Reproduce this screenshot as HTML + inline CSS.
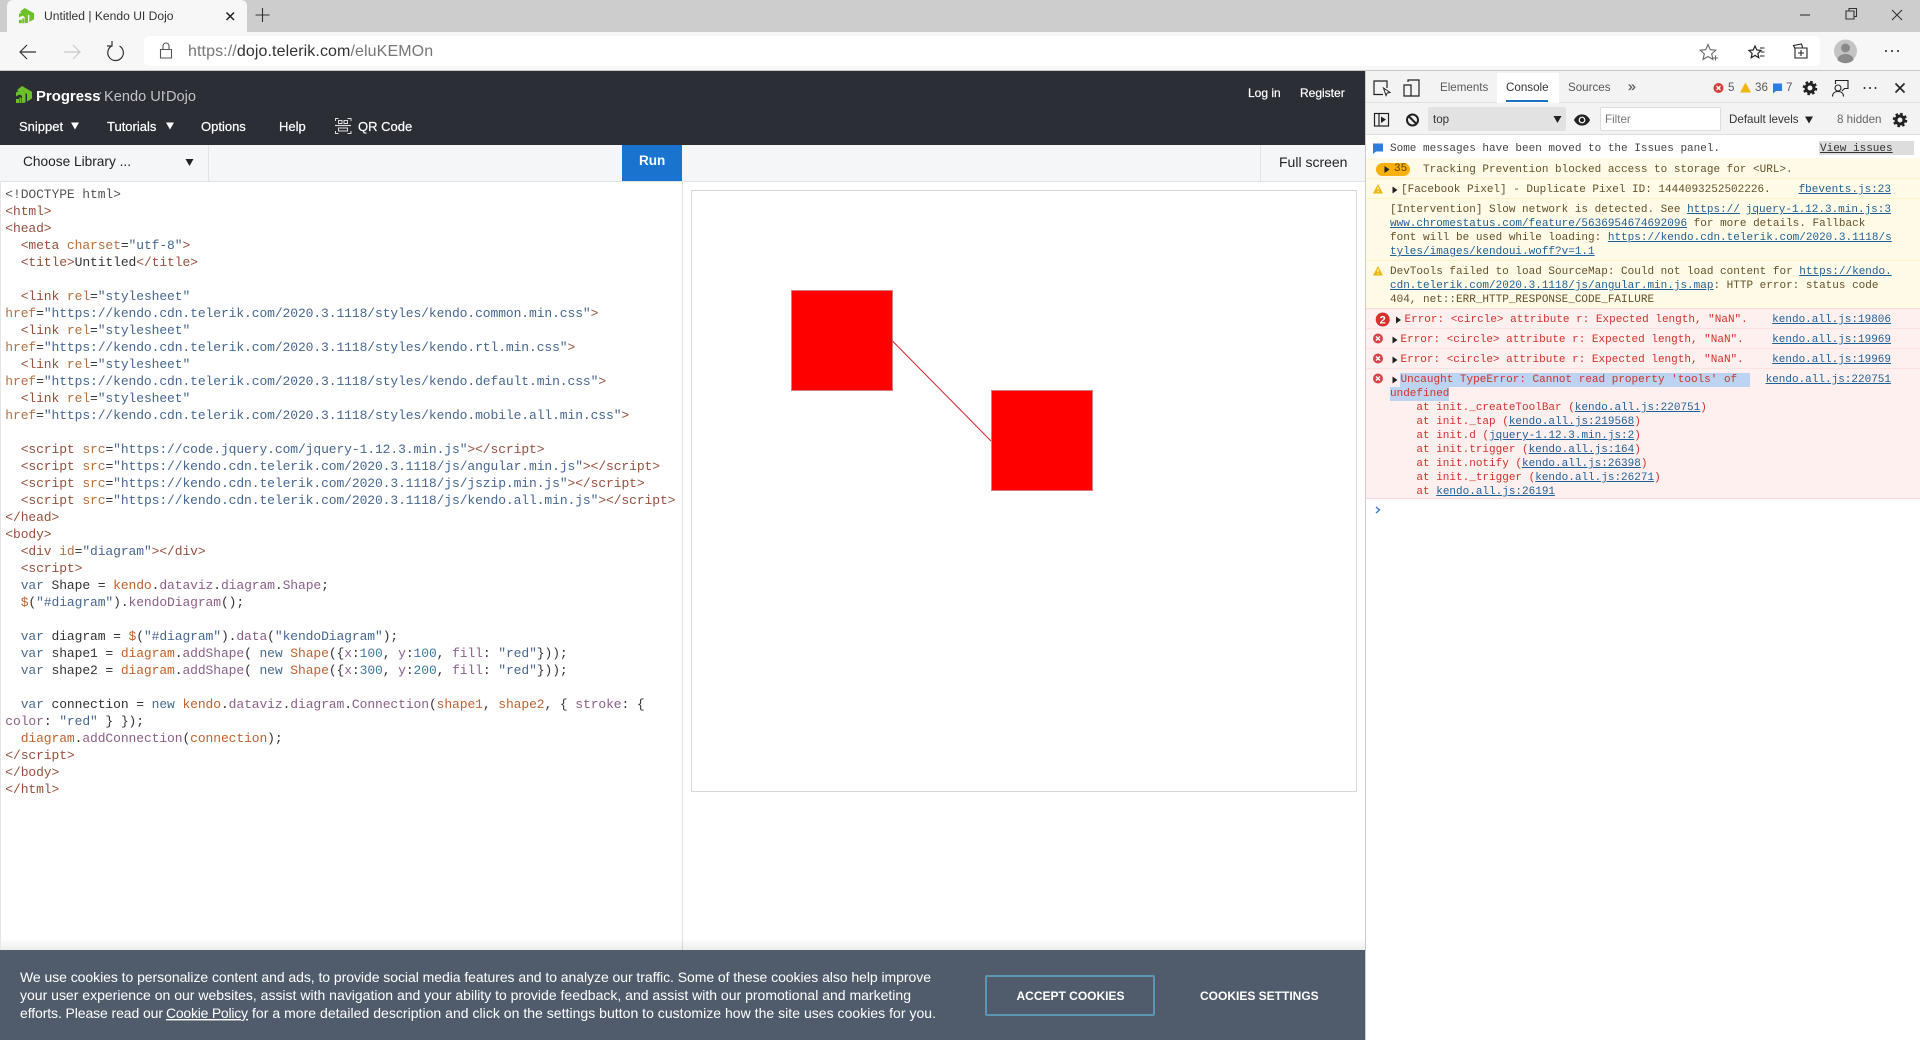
<!DOCTYPE html>
<html><head><meta charset="utf-8"><title>Untitled | Kendo UI Dojo</title>
<style>
html,body{margin:0;padding:0;background:#fff}
body{width:1920px;height:1040px;position:relative;overflow:hidden;font-family:"Liberation Sans",sans-serif;color:#222}
.b{position:absolute}
.x{position:absolute;white-space:pre;line-height:16px}
.w{color:#fff;font-size:13px;-webkit-text-stroke:.2px #fff}
pre{margin:0}
#code{position:absolute;left:5.3px;top:186px;font:13px/17px "Liberation Mono",monospace;letter-spacing:-.1px;color:#333}
.g{color:#96503c}.h{color:#b5703f}.s{color:#466790}.k{color:#4a6c8c}.v{color:#c0622d}.p{color:#8a6088}.n{color:#3d7a9c}
.m{position:absolute;white-space:pre;font:11px/14px "Liberation Mono",monospace;color:#63502a}
.e{color:#d3302a}
.m a{color:#1f5f98;text-decoration:underline}
.r{right:29px}
.d{font-size:11.6px;color:#5a5a5a}
</style></head>
<body>
<!-- browser chrome -->
<div class="b" style="left:0;top:0;width:1920px;height:32px;background:#cdcdcd"></div>
<div class="b" style="left:0;top:32px;width:1920px;height:39px;background:#f7f7f7;border-bottom:1px solid #c8c8c8;box-sizing:border-box"></div>
<div class="b" style="left:7px;top:0;width:240px;height:33px;background:#f7f7f7;border-radius:6px 6px 0 0"></div>
<div class="x" style="left:44px;top:8px;font-size:12.1px;color:#333">Untitled | Kendo UI Dojo</div>
<div class="b" style="left:144px;top:36px;width:1676px;height:30px;background:#fff;border-radius:5px"></div>
<div class="x" style="left:188px;top:44px;font-size:16px;color:#777;letter-spacing:.1px">https://<span style="color:#333">dojo.telerik.com</span>/eluKEMOn</div>

<!-- dojo header -->
<div class="b" style="left:0;top:71px;width:1365px;height:74px;background:#2b2e35"></div>
<div class="x" style="left:36px;top:89px;font-size:14.9px;font-weight:bold;color:#fff">Progress</div>
<div class="x" style="left:104px;top:89px;font-size:14.6px;color:#c4c4c4">Kendo UI</div>
<div class="x" style="left:166px;top:89px;font-size:14.6px;color:#c4c4c4">Dojo</div>
<div class="x w" style="left:19px;top:119px">Snippet</div>
<div class="x w" style="left:107px;top:119px">Tutorials</div>
<div class="x w" style="left:201px;top:119px">Options</div>
<div class="x w" style="left:279px;top:119px">Help</div>
<div class="x w" style="left:358px;top:119px">QR Code</div>
<div class="x w" style="left:1248px;top:85px;font-size:12px">Log in</div>
<div class="x w" style="left:1300px;top:85px;font-size:12px">Register</div>

<!-- library bar -->
<div class="b" style="left:0;top:145px;width:1365px;height:37px;background:#f5f6f8;border-bottom:1px solid #dfe1e4;box-sizing:border-box"></div>
<div class="b" style="left:208px;top:145px;width:1px;height:36px;background:#e2e3e6"></div>
<div class="b" style="left:1260px;top:145px;width:1px;height:36px;background:#e2e3e6"></div>
<div class="b" style="left:622px;top:145px;width:60px;height:36px;background:#1a73cf"></div>
<div class="x" style="left:23px;top:154px;font-size:13.7px;color:#222">Choose Library ...</div>
<div class="x" style="left:639px;top:153px;font-size:13.5px;font-weight:bold;color:#fff">Run</div>
<div class="x" style="left:1279px;top:154px;font-size:14px;color:#222">Full screen</div>

<!-- editor -->
<div class="b" style="left:0;top:181px;width:1px;height:770px;background:#e6e6e6"></div>
<div class="b" style="left:682px;top:181px;width:1px;height:770px;background:#e2e2e2"></div>
<pre id="code"><span style="color:#555">&lt;!DOCTYPE html&gt;</span>
<span class="g">&lt;html&gt;</span>
<span class="g">&lt;head&gt;</span>
  <span class="g">&lt;meta</span> <span class="h">charset</span>=<span class="s">"utf-8"</span><span class="g">&gt;</span>
  <span class="g">&lt;title&gt;</span>Untitled<span class="g">&lt;/title&gt;</span>

  <span class="g">&lt;link</span> <span class="h">rel</span>=<span class="s">"stylesheet"</span>
<span class="h">href</span>=<span class="s">"https://kendo.cdn.telerik.com/2020.3.1118/styles/kendo.common.min.css"</span><span class="g">&gt;</span>
  <span class="g">&lt;link</span> <span class="h">rel</span>=<span class="s">"stylesheet"</span>
<span class="h">href</span>=<span class="s">"https://kendo.cdn.telerik.com/2020.3.1118/styles/kendo.rtl.min.css"</span><span class="g">&gt;</span>
  <span class="g">&lt;link</span> <span class="h">rel</span>=<span class="s">"stylesheet"</span>
<span class="h">href</span>=<span class="s">"https://kendo.cdn.telerik.com/2020.3.1118/styles/kendo.default.min.css"</span><span class="g">&gt;</span>
  <span class="g">&lt;link</span> <span class="h">rel</span>=<span class="s">"stylesheet"</span>
<span class="h">href</span>=<span class="s">"https://kendo.cdn.telerik.com/2020.3.1118/styles/kendo.mobile.all.min.css"</span><span class="g">&gt;</span>

  <span class="g">&lt;script</span> <span class="h">src</span>=<span class="s">"https://code.jquery.com/jquery-1.12.3.min.js"</span><span class="g">&gt;&lt;/script&gt;</span>
  <span class="g">&lt;script</span> <span class="h">src</span>=<span class="s">"https://kendo.cdn.telerik.com/2020.3.1118/js/angular.min.js"</span><span class="g">&gt;&lt;/script&gt;</span>
  <span class="g">&lt;script</span> <span class="h">src</span>=<span class="s">"https://kendo.cdn.telerik.com/2020.3.1118/js/jszip.min.js"</span><span class="g">&gt;&lt;/script&gt;</span>
  <span class="g">&lt;script</span> <span class="h">src</span>=<span class="s">"https://kendo.cdn.telerik.com/2020.3.1118/js/kendo.all.min.js"</span><span class="g">&gt;&lt;/script&gt;</span>
<span class="g">&lt;/head&gt;</span>
<span class="g">&lt;body&gt;</span>
  <span class="g">&lt;div</span> <span class="h">id</span>=<span class="s">"diagram"</span><span class="g">&gt;&lt;/div&gt;</span>
  <span class="g">&lt;script&gt;</span>
  <span class="k">var</span> Shape = <span class="v">kendo</span>.<span class="p">dataviz</span>.<span class="p">diagram</span>.<span class="p">Shape</span>;
  <span class="v">$</span>(<span class="s">"#diagram"</span>).<span class="p">kendoDiagram</span>();

  <span class="k">var</span> diagram = <span class="v">$</span>(<span class="s">"#diagram"</span>).<span class="p">data</span>(<span class="s">"kendoDiagram"</span>);
  <span class="k">var</span> shape1 = <span class="v">diagram</span>.<span class="p">addShape</span>( <span class="k">new</span> <span class="v">Shape</span>({<span class="p">x</span>:<span class="n">100</span>, <span class="p">y</span>:<span class="n">100</span>, <span class="p">fill</span>: <span class="s">"red"</span>}));
  <span class="k">var</span> shape2 = <span class="v">diagram</span>.<span class="p">addShape</span>( <span class="k">new</span> <span class="v">Shape</span>({<span class="p">x</span>:<span class="n">300</span>, <span class="p">y</span>:<span class="n">200</span>, <span class="p">fill</span>: <span class="s">"red"</span>}));

  <span class="k">var</span> connection = <span class="k">new</span> <span class="v">kendo</span>.<span class="p">dataviz</span>.<span class="p">diagram</span>.<span class="p">Connection</span>(<span class="v">shape1</span>, <span class="v">shape2</span>, { <span class="p">stroke</span>: {
<span class="p">color</span>: <span class="s">"red"</span> } });
  <span class="v">diagram</span>.<span class="p">addConnection</span>(<span class="v">connection</span>);
<span class="g">&lt;/script&gt;</span>
<span class="g">&lt;/body&gt;</span>
<span class="g">&lt;/html&gt;</span></pre>

<!-- preview -->
<div class="b" style="left:691px;top:190px;width:666px;height:602px;border:1px solid #d4d6d8;box-sizing:border-box;background:#fff"></div>
<div class="b" style="left:791px;top:290px;width:102px;height:101px;background:#f00;border:1px solid #cf7f7f;box-sizing:border-box"></div>
<div class="b" style="left:991px;top:390px;width:102px;height:101px;background:#f00;border:1px solid #cf7f7f;box-sizing:border-box"></div>

<!-- cookie banner -->
<div class="b" style="left:1px;top:938px;width:1364px;height:12px;background:linear-gradient(rgba(0,0,0,0),rgba(0,0,0,.07))"></div>
<div class="b" style="left:0;top:950px;width:1365px;height:90px;background:#505c6b"></div>
<svg class="b" style="left:0;top:950px" width="985" height="90" font-family="Liberation Sans, sans-serif" font-size="14" fill="#fff">
<text x="20" y="32" textLength="911" lengthAdjust="spacing">We use cookies to personalize content and ads, to provide social media features and to analyze our traffic. Some of these cookies also help improve</text>
<text x="20" y="50" textLength="891" lengthAdjust="spacing">your user experience on our websites, assist with navigation and your ability to provide feedback, and assist with our promotional and marketing</text>
<text x="20" y="68" textLength="143" lengthAdjust="spacing">efforts. Please read our</text>
<text x="166" y="68" textLength="82" lengthAdjust="spacing" text-decoration="underline">Cookie Policy</text>
<text x="252" y="68" textLength="684" lengthAdjust="spacing">for a more detailed description and click on the settings button to customize how the site uses cookies for you.</text>
</svg>
<div class="b" style="left:985px;top:975px;width:170px;height:41px;border:2px solid #5a97b5;border-radius:2px;box-sizing:border-box"></div>
<div class="x" style="left:1016.500px;top:988px;font-size:12px;font-weight:bold;color:#fff">ACCEPT COOKIES</div>
<div class="x" style="left:1200px;top:988px;font-size:12px;font-weight:bold;color:#fff">COOKIES SETTINGS</div>

<!-- devtools -->
<div class="b" style="left:1365px;top:71px;width:555px;height:969px;background:#fff;border-left:1px solid #ccc;box-sizing:border-box"></div>
<div class="b" style="left:1366px;top:71px;width:554px;height:32px;background:#f3f3f3;border-bottom:1px solid #e0e0e0;box-sizing:border-box"></div>
<div class="b" style="left:1366px;top:103px;width:554px;height:32px;background:#f3f3f3;border-bottom:1px solid #ddd;box-sizing:border-box"></div>
<div class="b" style="left:1497px;top:73px;width:62px;height:30px;background:#fff"></div>
<div class="b" style="left:1506px;top:100px;width:42px;height:2px;background:#1a73c0"></div>
<div class="x d" style="left:1440px;top:80px">Elements</div>
<div class="x d" style="left:1506px;top:80px;color:#333">Console</div>
<div class="x d" style="left:1568px;top:80px">Sources</div>
<div class="x d" style="left:1628px;top:78px;font-size:14px;-webkit-text-stroke:.3px #5a5a5a">»</div>
<div class="x d" style="left:1728px;top:80px">5</div>
<div class="x d" style="left:1755px;top:80px">36</div>
<div class="x d" style="left:1786px;top:80px">7</div>
<div class="b" style="left:1428px;top:107px;width:138px;height:24px;background:#e2e2e2;border-radius:2px"></div>
<div class="x d" style="left:1433px;top:112px;color:#333">top</div>
<div class="b" style="left:1600px;top:107px;width:121px;height:24px;background:#fff;border:1px solid #dcdcdc;border-radius:2px;box-sizing:border-box"></div>
<div class="x d" style="left:1605px;top:112px;color:#777">Filter</div>
<div class="x d" style="left:1729px;top:112px;color:#333">Default levels</div>
<div class="x d" style="left:1837px;top:112px;color:#666">8 hidden</div>

<!-- console rows -->
<div class="b" style="left:1366px;top:135px;width:554px;height:23px;background:#fff"></div>
<div class="b" style="left:1366px;top:158px;width:554px;height:150px;background:#fffbe6"></div>
<div class="b" style="left:1366px;top:178px;width:554px;height:1px;background:#fff3c4"></div>
<div class="b" style="left:1366px;top:198px;width:554px;height:1px;background:#fff3c4"></div>
<div class="b" style="left:1366px;top:260px;width:554px;height:1px;background:#fff3c4"></div>
<div class="b" style="left:1366px;top:308px;width:554px;height:191px;background:#fff0f0;border-top:1px solid #ffd9d9;border-bottom:1px solid #ffd9d9;box-sizing:border-box"></div>
<div class="b" style="left:1366px;top:328px;width:554px;height:1px;background:#ffe0e0"></div>
<div class="b" style="left:1366px;top:348px;width:554px;height:1px;background:#ffe0e0"></div>
<div class="b" style="left:1366px;top:368px;width:554px;height:1px;background:#ffe0e0"></div>
<div class="b" style="left:1819px;top:141px;width:95px;height:14px;background:#ddd"></div>
<div class="b" style="left:1376px;top:163px;width:34px;height:13px;background:#f9b008;border-radius:7px"></div>
<div class="b" style="left:1400px;top:373px;width:350px;height:14px;background:#bcd4f2"></div>
<div class="b" style="left:1390px;top:387px;width:59px;height:14px;background:#bcd4f2"></div>

<div class="m" style="left:1390px;top:142px;color:#444">Some messages have been moved to the Issues panel.</div>
<div class="m" style="left:1820px;top:142px;color:#333;text-decoration:underline">View issues</div>
<div class="m" style="left:1394px;top:162px;color:#5c3c00">35</div>
<div class="m" style="left:1423px;top:163px">Tracking Prevention blocked access to storage for &lt;URL&gt;.</div>
<div class="m" style="left:1401px;top:183px">[Facebook Pixel] - Duplicate Pixel ID: 1444093252502226.</div>
<div class="m r" style="top:183px"><a>fbevents.js:23</a></div>
<div class="m" style="left:1390px;top:203px">[Intervention] Slow network is detected. See <a>https://</a></div>
<div class="m r" style="top:203px"><a>jquery-1.12.3.min.js:3</a></div>
<div class="m" style="left:1390px;top:217px"><a>www.chromestatus.com/feature/5636954674692096</a> for more details. Fallback</div>
<div class="m" style="left:1390px;top:231px">font will be used while loading: <a>https://kendo.cdn.telerik.com/2020.3.1118/s</a></div>
<div class="m" style="left:1390px;top:245px"><a>tyles/images/kendoui.woff?v=1.1</a></div>
<div class="m" style="left:1390px;top:265px">DevTools failed to load SourceMap: Could not load content for <a>https://kendo.</a></div>
<div class="m" style="left:1390px;top:279px"><a>cdn.telerik.com/2020.3.1118/js/angular.min.js.map</a>: HTTP error: status code</div>
<div class="m" style="left:1390px;top:293px">404, net::ERR_HTTP_RESPONSE_CODE_FAILURE</div>

<div class="m e" style="left:1404.5px;top:313px">Error: &lt;circle&gt; attribute r: Expected length, "NaN".</div>
<div class="m r" style="top:313px"><a>kendo.all.js:19806</a></div>
<div class="m e" style="left:1400.5px;top:333px">Error: &lt;circle&gt; attribute r: Expected length, "NaN".</div>
<div class="m r" style="top:333px"><a>kendo.all.js:19969</a></div>
<div class="m e" style="left:1400.5px;top:353px">Error: &lt;circle&gt; attribute r: Expected length, "NaN".</div>
<div class="m r" style="top:353px"><a>kendo.all.js:19969</a></div>
<div class="m e" style="left:1400.5px;top:373px">Uncaught TypeError: Cannot read property 'tools' of</div>
<div class="m r" style="top:373px"><a>kendo.all.js:220751</a></div>
<div class="m e" style="left:1390px;top:387px">undefined</div>
<div class="m e" style="left:1390px;top:401px">    at init._createToolBar (<a>kendo.all.js:220751</a>)
    at init._tap (<a>kendo.all.js:219568</a>)
    at init.d (<a>jquery-1.12.3.min.js:2</a>)
    at init.trigger (<a>kendo.all.js:164</a>)
    at init.notify (<a>kendo.all.js:26398</a>)
    at init._trigger (<a>kendo.all.js:26271</a>)
    at <a>kendo.all.js:26191</a></div>

<!-- icons & shapes overlay -->
<svg class="b" style="left:0;top:0;pointer-events:none" width="1920" height="1040" viewBox="0 0 1920 1040">
<!-- favicon -->
<g fill="#6cc02a" transform="translate(19 8) scale(.94 .9)">
<path d="M6 0L16 5.800V12.500L11 15.500V8L6 5 4 6.200 1 4z"/><path d="M0 6.500L4.500 4 9.500 7V16.500L6 17V10L3.500 8.500 0 10.500z"/><path d="M0 13h3v4H0zM3.500 11L5.500 12V17H3.500z"/>
</g>
<!-- tab close & new -->
<path d="M226.500 12.500l7.500 7.500M234 12.500l-7.500 7.500" stroke="#222" stroke-width="1.500" fill="none"/>
<path d="M262.500 8v14M255.500 15h14" stroke="#333" stroke-width="1.100" fill="none"/>
<!-- window controls -->
<path d="M1800 15h10" stroke="#333" stroke-width="1.100"/>
<path d="M1846.500 11h7.500v8h-8v-8zM1849 11V8.500h7.500v8H1854" stroke="#333" stroke-width="1.100" fill="none"/>
<path d="M1892 10l10 10M1902 10l-10 10" stroke="#333" stroke-width="1.100"/>
<!-- nav -->
<path d="M36 52H21M27 45l-7 7 7 7" stroke="#333" stroke-width="1.200" fill="none"/>
<path d="M64 52h15M73 45l7 7-7 7" stroke="#c9c9c9" stroke-width="1.200" fill="none"/>
<path d="M119.500 46a7.800 7.800 0 1 1-7.300-.3M112 41v5h-5" stroke="#333" stroke-width="1.200" fill="none"/>
<path d="M160.500 49.500h11v8.500h-11zM163 49.500V46a3 3 0 0 1 6 0v3.500" stroke="#555" stroke-width="1.100" fill="none"/>
<!-- star -->
<path d="M1708 44.500l2.300 5.200 5.500.5-4.100 3.700 1.200 5.500-4.900-2.900-4.900 2.900 1.200-5.500-4.100-3.700 5.500-.5z" stroke="#666" stroke-width="1.100" fill="none"/>
<path d="M1713 58h5M1715.500 55.500v5" stroke="#666" stroke-width="1"/>
<!-- favorites -->
<path d="M1755 46l1.800 4 4.200.5-3.100 2.900.9 4.300-3.800-2.200-3.800 2.200.9-4.300-3.100-2.900 4.200-.5z" stroke="#222" stroke-width="1.200" fill="none"/>
<path d="M1760 48h4.500M1761 52h3.500M1760 56h4.500" stroke="#222" stroke-width="1.100"/>
<!-- collections -->
<path d="M1795 48.500l-1.500-3 8-1.500 1 3.500M1795 48h12v10h-12z" stroke="#222" stroke-width="1.100" fill="none"/>
<path d="M1801 50v6M1798 53h6" stroke="#222" stroke-width="1.100"/>
<!-- avatar -->
<circle cx="1845.500" cy="51" r="11.500" fill="#c4c4c4"/>
<circle cx="1845.500" cy="48" r="4.500" fill="#8a8a8a"/>
<path d="M1837.500 60a8 6 0 0 1 16 0 11.500 11.500 0 0 1-16 0z" fill="#8a8a8a"/>
<circle cx="1886" cy="51" r="1" fill="#222"/><circle cx="1892" cy="51" r="1" fill="#222"/><circle cx="1898" cy="51" r="1" fill="#222"/>
<!-- logo -->
<g fill="#6cc02a" transform="translate(16 86)">
<path d="M6 0L16 5.800V12.500L11 15.500V8L6 5 4 6.200 1 4z"/><path d="M0 6.500L4.500 4 9.500 7V16.500L6 17V10L3.500 8.500 0 10.500z"/><path d="M0 13h3v4H0zM3.500 11L5.500 12V17H3.500z"/>
</g>
<!-- small tm dots -->
<circle cx="100.500" cy="93" r=".8" fill="#ccc"/><circle cx="164.500" cy="93" r=".8" fill="#ccc"/>
<!-- nav triangles -->
<path d="M71 122.500h8l-4 7zM166 122.500h8l-4 7z" fill="#fff"/>
<!-- QR -->
<g stroke="#ddd" stroke-width="1" fill="none">
<path d="M335.500 121v-2.500h3M347.500 118.500h3.500v2.500M335.500 131v2.500h3M347.500 133.500h3.500V131"/>
<rect x="338.500" y="120.500" width="3.500" height="3"/><rect x="344" y="120.500" width="3.500" height="3"/>
<path d="M335 125.500h16" stroke-width="1.200"/>
<rect x="338.500" y="128" width="9" height="3"/>
</g>
<!-- choose library arrow -->
<path d="M185.500 159h8l-4 7z" fill="#222"/>
<!-- connection -->
<path d="M892.500 341L991 441" stroke="#d4232c" stroke-width="1" fill="none"/>
<!-- devtools top -->
<g stroke="#222" stroke-width="1.200" fill="none">
<path d="M1383 94.500h-9v-13.500h13v7"/><path d="M1383.500 88l2.500 7.500 1.200-2.500 2.800-.5z" fill="#fff" stroke-width="1"/>
<path d="M1408 82v-2h11v16h-15V85h7v11" />
</g>
<circle cx="1718.500" cy="88" r="5" fill="#d93a3a"/><path d="M1716.500 86l4 4M1720.500 86l-4 4" stroke="#fff" stroke-width="1.400"/>
<path d="M1745.500 82.500l5.500 10h-11z" fill="#efb60d"/>
<path d="M1773 83.500h9v7.500h-6l-3 2.500z" fill="#2b7de0"/>
<!-- gear helper -->
<g fill="none" stroke="#222">
<circle cx="1810" cy="88" r="4" stroke-width="3"/><circle cx="1810" cy="88" r="6" stroke-width="2.500" stroke-dasharray="2.500 2.210"/>
<circle cx="1900" cy="120" r="4" stroke-width="3"/><circle cx="1900" cy="120" r="6" stroke-width="2.500" stroke-dasharray="2.500 2.210"/>
</g>
<!-- feedback -->
<g fill="none" stroke="#222" stroke-width="1.100">
<circle cx="1838" cy="88" r="3"/><path d="M1832.500 96.500c0-3 2-5 5.500-5s5.500 2 5.500 5"/>
<path d="M1835.500 84v-3.500h12.500v8h-3.500l-2.500 2.500"/>
</g>
<circle cx="1864.500" cy="88" r="1" fill="#222"/><circle cx="1870" cy="88" r="1" fill="#222"/><circle cx="1875.500" cy="88" r="1" fill="#222"/>
<path d="M1895.500 83.500l9 9M1904.500 83.500l-9 9" stroke="#222" stroke-width="1.600"/>
<!-- row 2 icons -->
<g fill="none" stroke="#222" stroke-width="1.200">
<rect x="1374.500" y="113.500" width="14" height="12.500"/><path d="M1379 113.500v12.500"/>
<circle cx="1412.500" cy="120" r="5.500" stroke-width="2"/><path d="M1408.500 116l8 8" stroke-width="2"/>
</g>
<path d="M1381 116.500l5 3-5 3.500z" fill="#222"/>
<path d="M1553.500 116h8l-4 7z" fill="#222"/>
<path d="M1574 120c3.500-7.500 12.500-7.500 16 0-3.500 7.500-12.500 7.500-16 0z" fill="#222"/><circle cx="1582" cy="120" r="3.400" fill="#fff"/><circle cx="1582" cy="120" r="2.200" fill="#222"/>
<path d="M1805 116.500h8l-4 7z" fill="#222"/>
<!-- console icons -->
<path d="M1373 143.500h10v8h-7l-3 2.500z" fill="#2b7de0"/>
<path d="M1384.500 166l5 3.500-5 3.500z" fill="#222"/>
<path d="M1378 184l5 9.500h-10z" fill="#efb60d"/><path d="M1378 187v3M1378 191v1" stroke="#fff" stroke-width="1"/>
<path d="M1378 266l5 9.500h-10z" fill="#efb60d"/><path d="M1378 269v3M1378 273v1" stroke="#fff" stroke-width="1"/>
<path d="M1392.500 186.500l5 3.500-5 3.500zM1396 316.500l5 3.500-5 3.500zM1392.500 336.500l5 3.500-5 3.500zM1392.500 356.500l5 3.500-5 3.500zM1392.500 376.500l5 3.500-5 3.500z" fill="#222"/>
<circle cx="1382.700" cy="319.500" r="7" fill="#d8302c"/>
<text x="1382.700" y="323.500" text-anchor="middle" font-family="Liberation Sans, sans-serif" font-size="11" font-weight="bold" fill="#fff">2</text>
<g>
<circle cx="1378" cy="338.500" r="5" fill="#d9434a"/><circle cx="1378" cy="358.500" r="5" fill="#d9434a"/><circle cx="1378" cy="378.500" r="5" fill="#d9434a"/>
<path d="M1376 336.500l4 4M1380 336.500l-4 4M1376 356.500l4 4M1380 356.500l-4 4M1376 376.500l4 4M1380 376.500l-4 4" stroke="#fff" stroke-width="1.300"/>
</g>
<path d="M1376 507l3.500 3-3.500 3" stroke="#3b78c8" stroke-width="1.400" fill="none"/>
</svg>
</body></html>
